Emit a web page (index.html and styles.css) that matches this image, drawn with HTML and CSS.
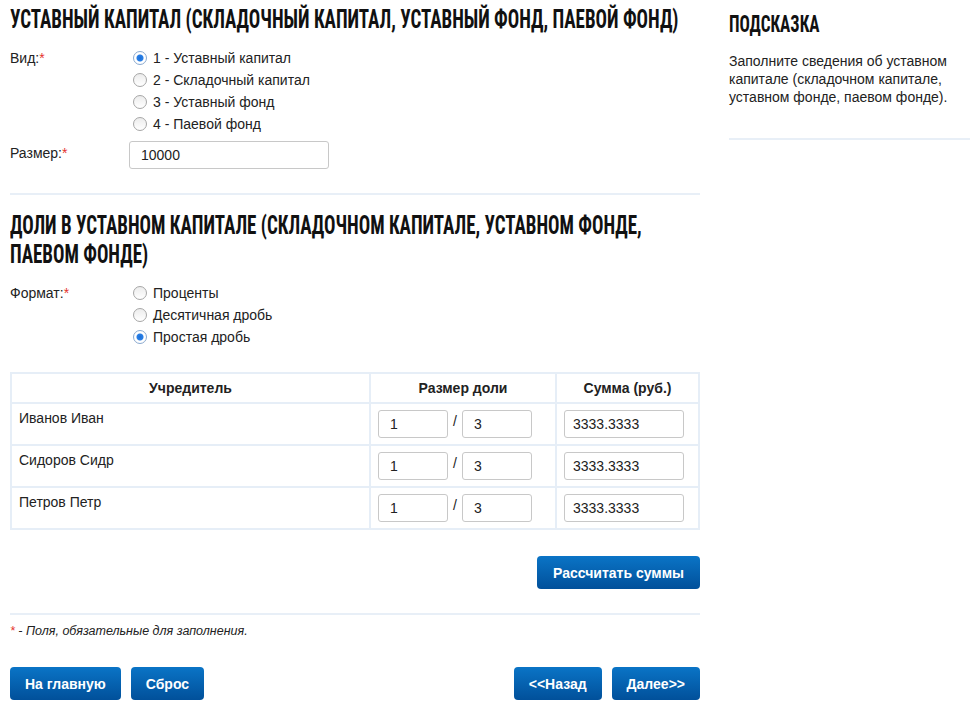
FILE: index.html
```html
<!DOCTYPE html>
<html>
<head>
    <title>Уставный капитал</title>
    <link rel="stylesheet" href="styles.css">
</head>
<body>
    <div class="page">
        <div class="main">
            <h1 class="title"><span class="cond">Уставный капитал (складочный капитал, уставный фонд, паевой фонд)</span></h1>

            <div class="form-row">
                <div class="label">Вид:<span class="req">*</span></div>
                <div class="options">
                    <label class="option"><input type="radio" name="kind" checked> 1 - Уставный капитал</label>
                    <label class="option"><input type="radio" name="kind"> 2 - Складочный капитал</label>
                    <label class="option"><input type="radio" name="kind"> 3 - Уставный фонд</label>
                    <label class="option"><input type="radio" name="kind"> 4 - Паевой фонд</label>
                </div>
            </div>
            <div class="form-row size-row">
                <div class="label">Размер:<span class="req">*</span></div>
                <input type="text" class="field field-size" value="10000">
            </div>

            <hr class="sep sep-first">

            <h1 class="title title-second"><span class="cond">Доли в уставном капитале (складочном капитале, уставном фонде,<br>паевом фонде)</span></h1>

            <div class="form-row">
                <div class="label">Формат:<span class="req">*</span></div>
                <div class="options">
                    <label class="option"><input type="radio" name="format"> Проценты</label>
                    <label class="option"><input type="radio" name="format"> Десятичная дробь</label>
                    <label class="option"><input type="radio" name="format" checked> Простая дробь</label>
                </div>
            </div>

            <table class="shares">
                <thead>
                    <tr>
                        <th class="col-name">Учредитель</th>
                        <th class="col-share">Размер доли</th>
                        <th class="col-sum">Сумма (руб.)</th>
                    </tr>
                </thead>
                <tbody>
                    <tr>
                        <td class="name">Иванов Иван</td>
                        <td><input type="text" class="field field-frac" value="1"><span class="slash">/</span><input type="text" class="field field-frac" value="3"></td>
                        <td><input type="text" class="field field-sum" value="3333.3333"></td>
                    </tr>
                    <tr>
                        <td class="name">Сидоров Сидр</td>
                        <td><input type="text" class="field field-frac" value="1"><span class="slash">/</span><input type="text" class="field field-frac" value="3"></td>
                        <td><input type="text" class="field field-sum" value="3333.3333"></td>
                    </tr>
                    <tr>
                        <td class="name">Петров Петр</td>
                        <td><input type="text" class="field field-frac" value="1"><span class="slash">/</span><input type="text" class="field field-frac" value="3"></td>
                        <td><input type="text" class="field field-sum" value="3333.3333"></td>
                    </tr>
                </tbody>
            </table>

            <div class="calc-bar">
                <button class="btn btn-calc">Рассчитать суммы</button>
            </div>

            <hr class="sep sep-bottom">

            <p class="note"><span class="req">*</span> - Поля, обязательные для заполнения.</p>

            <div class="nav-bar">
                <div class="nav-group">
                    <button class="btn">На главную</button>
                    <button class="btn">Сброс</button>
                </div>
                <div class="nav-group">
                    <button class="btn">&lt;&lt;Назад</button>
                    <button class="btn">Далее&gt;&gt;</button>
                </div>
            </div>
        </div>

        <div class="sidebar">
            <h2 class="hint-title"><span class="cond">Подсказка</span></h2>
            <p class="hint-text">Заполните сведения об уставном капитале (складочном капитале, уставном фонде, паевом фонде).</p>
            <hr class="sep">
        </div>
    </div>
</body>
</html>
```

FILE: styles.css
```css
body {
    margin: 0;
    background-color: white;
    color: #222;
    font-family: "Liberation Sans", Arial, sans-serif;
    font-size: 14px;
}
.page {
    display: flex;
    align-items: flex-start;
    padding-left: 10px;
}
.main {
    width: 690px;
}
.sidebar {
    width: 241px;
    margin-left: 29px;
}
.title {
    margin: 4px 0 0;
    font-family: "Roboto Condensed", "DejaVu Sans Condensed", sans-serif;
    font-size: 26px;
    line-height: 30px;
    font-weight: bold;
    text-transform: uppercase;
    color: #111;
    white-space: nowrap;
}
/* шрифт заголовков уже, чем любой из доступных */
.cond {
    display: inline-block;
    transform: scaleX(0.73);
    transform-origin: left top;
}
.title-second {
    margin-top: 16px;
    line-height: 29px;
}
.form-row {
    display: flex;
    margin-top: 13px;
}
.label {
    width: 119px;
    line-height: 22px;
}
.req {
    color: #e5322d;
}
.options {
    display: flex;
    flex-direction: column;
}
.option {
    display: flex;
    align-items: center;
    height: 22px;
    margin-left: 4px;
}
.option input {
    appearance: none;
    width: 14px;
    height: 14px;
    margin: 0 6px 0 0;
    border: 1px solid #a6a6a6;
    border-radius: 50%;
    background: linear-gradient(#ececec, #ffffff);
}
.option input:checked {
    background: radial-gradient(circle, #1a6fd8 0, #2a7fe6 3px, #ffffff 4px);
    border-color: #8aa9cf;
}
.size-row {
    margin-top: 6px;
}
.size-row .label {
    line-height: 24px;
}
.field {
    height: 28px;
    box-sizing: border-box;
    border: 1px solid #c8c8c8;
    border-radius: 3px;
    padding: 0 11px;
    font-family: "Liberation Sans", Arial, sans-serif;
    font-size: 14px;
    color: #222;
}
.field-size {
    width: 200px;
}
.field-frac {
    width: 70px;
}
.field-sum {
    width: 120px;
    padding: 0 8px;
}
.slash {
    display: inline-block;
    width: 14px;
    text-align: center;
    vertical-align: top;
    line-height: 22px;
}
.sep {
    border: none;
    height: 2px;
    background-color: #e8eff7;
    margin: 0;
}
.sep-first {
    margin-top: 24px;
}
.shares {
    width: 100%;
    margin-top: 24px;
    border-collapse: collapse;
}
.shares th,
.shares td {
    border: 2px solid #e6eef7;
    padding: 6px 7px;
    line-height: 16px;
}
.shares th {
    font-weight: bold;
    text-align: center;
}
.shares td {
    vertical-align: top;
}
.col-name {
    width: 343px;
}
.col-share {
    width: 170px;
}
.calc-bar {
    display: flex;
    justify-content: flex-end;
    margin-top: 26px;
}
.btn {
    height: 33px;
    padding: 0 15px;
    border: none;
    border-radius: 4px;
    background: linear-gradient(#0a74c6, #01509a);
    color: white;
    font-family: "Liberation Sans", Arial, sans-serif;
    font-size: 14px;
    font-weight: bold;
    cursor: pointer;
}
.btn-calc {
    padding: 0 16px;
}
.sep-bottom {
    margin-top: 24px;
}
.note {
    margin: 8px 0 0;
    font-size: 12.5px;
    font-style: italic;
    line-height: 16px;
}
.nav-bar {
    display: flex;
    justify-content: space-between;
    margin-top: 28px;
}
.nav-group {
    display: flex;
    gap: 10px;
}
.hint-title {
    margin: 12px 0 0;
    font-family: "Roboto Condensed", "DejaVu Sans Condensed", sans-serif;
    font-size: 23.5px;
    line-height: 24px;
    font-weight: bold;
    text-transform: uppercase;
    color: #111;
}
.hint-text {
    margin: 16px 0 32px;
    line-height: 18px;
}
```
